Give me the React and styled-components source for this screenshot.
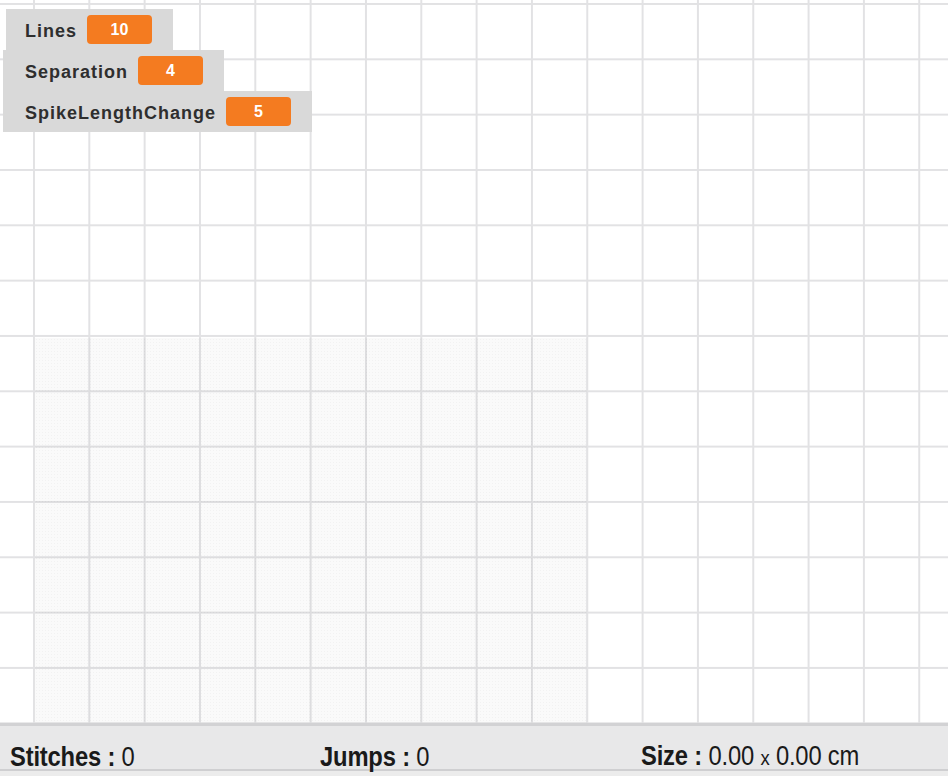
import React from "react";
import styled, { createGlobalStyle } from "styled-components";

const Global = createGlobalStyle`
  html, body { margin: 0; padding: 0; background: #ffffff; }
  body { font-family: "Liberation Sans", Arial, sans-serif; }
`;

const Page = styled.div`
  width: 948px;
  height: 776px;
  display: flex;
  flex-direction: column;
  overflow: hidden;
`;

const Canvas = styled.div`
  position: relative;
  flex: 0 0 723px;
  background-color: #ffffff;
  background-image:
    linear-gradient(to right, #e2e2e4 2px, transparent 2px),
    linear-gradient(to bottom, #e2e2e4 2px, transparent 2px);
  background-size: 55.33px 55.33px;
  background-position: 33px 3px;
`;

const Hoop = styled.div`
  position: absolute;
  left: 35px;
  top: 338px;
  width: 552px;
  height: 385px;
  background-color: rgba(0, 0, 0, 0.02);
  background-image: radial-gradient(rgba(0, 0, 0, 0.03) 0.6px, transparent 0.9px);
  background-size: 3px 3px;
`;

const Monitors = styled.div`
  position: absolute;
  left: 3px;
  top: 9px;
  display: flex;
  flex-direction: column;
  align-items: flex-start;
`;

const Monitor = styled.div`
  display: flex;
  align-items: center;
  gap: 10px;
  height: 41px;
  box-sizing: border-box;
  padding: 0 21px 0 ${(p) => (p.$inset ? 19 : 22)}px;
  margin-left: ${(p) => (p.$inset ? 3 : 0)}px;
  background: #d9d9d9;
`;

const Label = styled.span`
  font-family: "Liberation Sans", Arial, sans-serif;
  font-weight: bold;
  font-size: 18px;
  letter-spacing: 1px;
  color: #2e2e2e;
  padding-top: 3px;
`;

const Value = styled.span`
  display: flex;
  align-items: center;
  justify-content: center;
  width: 65px;
  height: 29px;
  border-radius: 4px;
  background: #f47b20;
  color: #ffffff;
  font-family: "Liberation Sans", Arial, sans-serif;
  font-weight: bold;
  font-size: 16px;
  padding-top: 1px;
  box-sizing: border-box;
`;

const StatusBar = styled.div`
  flex: 1;
  display: grid;
  grid-template-columns: 310px 321px 1fr;
  align-items: center;
  padding: 17px 0 0 10px;
  box-sizing: border-box;
  background: #e8e8e9;
  border-top: 3px solid #d2d2d4;
  border-bottom: 5px solid #ececec;
  box-shadow: inset 0 -2px 0 #cfcfd1;
`;

const Stat = styled.div`
  font-family: "Liberation Sans", Arial, sans-serif;
  font-size: 27px;
  line-height: 27px;
  color: #1a1a1a;
  white-space: nowrap;
  transform: scaleX(0.88);
  transform-origin: left center;
  letter-spacing: -0.2px;
`;

const Key = styled.b`
  font-weight: bold;
`;

const Times = styled.span`
  font-size: 21px;
`;

const monitors = [
  { label: "Lines", value: 10 },
  { label: "Separation", value: 4 },
  { label: "SpikeLengthChange", value: 5 },
];

export default function App() {
  return (
    <>
      <Global />
      <Page>
        <Canvas>
          <Hoop />
          <Monitors>
            {monitors.map((m, i) => (
              <Monitor key={m.label} $inset={i === 0}>
                <Label>{m.label}</Label>
                <Value>{m.value}</Value>
              </Monitor>
            ))}
          </Monitors>
        </Canvas>
        <StatusBar>
          <Stat>
            <Key>Stitches :</Key> 0
          </Stat>
          <Stat>
            <Key>Jumps :</Key> 0
          </Stat>
          <Stat>
            <Key>Size :</Key> 0.00 <Times>x</Times> 0.00 cm
          </Stat>
        </StatusBar>
      </Page>
    </>
  );
}
